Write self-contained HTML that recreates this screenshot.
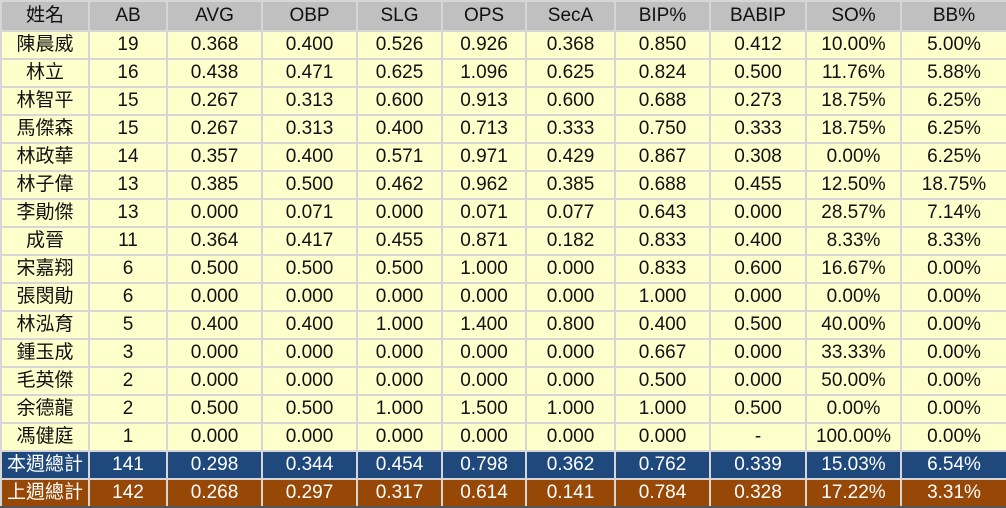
<!DOCTYPE html>
<html><head><meta charset="utf-8"><style>
body{margin:0;background:#fff;}
table{border-collapse:collapse;table-layout:fixed;width:1006px;font-family:"Liberation Sans","Noto Sans CJK TC",sans-serif;font-size:19px;}
tr{height:28px;}
tr.h{height:30px;}
td,th{border:2px solid #d6d6d6;padding:0;text-align:center;font-weight:normal;color:#111;white-space:nowrap;line-height:22px;}
th{background:#c0c0c0;}
td{background:#ffffcc;}
tr.b td{background:#1f497d;color:#fff;}
tr.o td{background:#974706;color:#fff;border-bottom:2px solid #555;}
</style></head><body>
<table>
<colgroup><col style="width:88px"><col style="width:78px"><col style="width:95px"><col style="width:95px"><col style="width:85px"><col style="width:84px"><col style="width:89px"><col style="width:95px"><col style="width:96px"><col style="width:95px"><col style="width:106px"></colgroup>
<tr class="h"><th>姓名</th><th>AB</th><th>AVG</th><th>OBP</th><th>SLG</th><th>OPS</th><th>SecA</th><th>BIP%</th><th>BABIP</th><th>SO%</th><th>BB%</th></tr>
<tr><td>陳晨威</td><td>19</td><td>0.368</td><td>0.400</td><td>0.526</td><td>0.926</td><td>0.368</td><td>0.850</td><td>0.412</td><td>10.00%</td><td>5.00%</td></tr>
<tr><td>林立</td><td>16</td><td>0.438</td><td>0.471</td><td>0.625</td><td>1.096</td><td>0.625</td><td>0.824</td><td>0.500</td><td>11.76%</td><td>5.88%</td></tr>
<tr><td>林智平</td><td>15</td><td>0.267</td><td>0.313</td><td>0.600</td><td>0.913</td><td>0.600</td><td>0.688</td><td>0.273</td><td>18.75%</td><td>6.25%</td></tr>
<tr><td>馬傑森</td><td>15</td><td>0.267</td><td>0.313</td><td>0.400</td><td>0.713</td><td>0.333</td><td>0.750</td><td>0.333</td><td>18.75%</td><td>6.25%</td></tr>
<tr><td>林政華</td><td>14</td><td>0.357</td><td>0.400</td><td>0.571</td><td>0.971</td><td>0.429</td><td>0.867</td><td>0.308</td><td>0.00%</td><td>6.25%</td></tr>
<tr><td>林子偉</td><td>13</td><td>0.385</td><td>0.500</td><td>0.462</td><td>0.962</td><td>0.385</td><td>0.688</td><td>0.455</td><td>12.50%</td><td>18.75%</td></tr>
<tr><td>李勛傑</td><td>13</td><td>0.000</td><td>0.071</td><td>0.000</td><td>0.071</td><td>0.077</td><td>0.643</td><td>0.000</td><td>28.57%</td><td>7.14%</td></tr>
<tr><td>成晉</td><td>11</td><td>0.364</td><td>0.417</td><td>0.455</td><td>0.871</td><td>0.182</td><td>0.833</td><td>0.400</td><td>8.33%</td><td>8.33%</td></tr>
<tr><td>宋嘉翔</td><td>6</td><td>0.500</td><td>0.500</td><td>0.500</td><td>1.000</td><td>0.000</td><td>0.833</td><td>0.600</td><td>16.67%</td><td>0.00%</td></tr>
<tr><td>張閔勛</td><td>6</td><td>0.000</td><td>0.000</td><td>0.000</td><td>0.000</td><td>0.000</td><td>1.000</td><td>0.000</td><td>0.00%</td><td>0.00%</td></tr>
<tr><td>林泓育</td><td>5</td><td>0.400</td><td>0.400</td><td>1.000</td><td>1.400</td><td>0.800</td><td>0.400</td><td>0.500</td><td>40.00%</td><td>0.00%</td></tr>
<tr><td>鍾玉成</td><td>3</td><td>0.000</td><td>0.000</td><td>0.000</td><td>0.000</td><td>0.000</td><td>0.667</td><td>0.000</td><td>33.33%</td><td>0.00%</td></tr>
<tr><td>毛英傑</td><td>2</td><td>0.000</td><td>0.000</td><td>0.000</td><td>0.000</td><td>0.000</td><td>0.500</td><td>0.000</td><td>50.00%</td><td>0.00%</td></tr>
<tr><td>余德龍</td><td>2</td><td>0.500</td><td>0.500</td><td>1.000</td><td>1.500</td><td>1.000</td><td>1.000</td><td>0.500</td><td>0.00%</td><td>0.00%</td></tr>
<tr><td>馮健庭</td><td>1</td><td>0.000</td><td>0.000</td><td>0.000</td><td>0.000</td><td>0.000</td><td>0.000</td><td>-</td><td>100.00%</td><td>0.00%</td></tr>
<tr class="b"><td>本週總計</td><td>141</td><td>0.298</td><td>0.344</td><td>0.454</td><td>0.798</td><td>0.362</td><td>0.762</td><td>0.339</td><td>15.03%</td><td>6.54%</td></tr>
<tr class="o"><td>上週總計</td><td>142</td><td>0.268</td><td>0.297</td><td>0.317</td><td>0.614</td><td>0.141</td><td>0.784</td><td>0.328</td><td>17.22%</td><td>3.31%</td></tr>
</table>
</body></html>
